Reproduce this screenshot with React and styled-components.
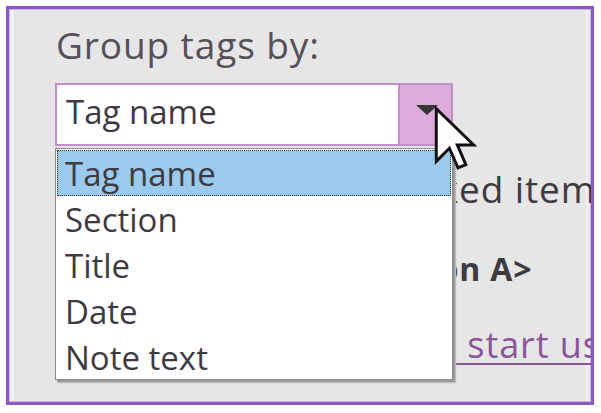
import React from "react";
import styled, { createGlobalStyle } from "styled-components";

const Global = createGlobalStyle`
  html, body { margin: 0; padding: 0; background: #ffffff; }
  body { font-family: "Open Sans", "Noto Sans", sans-serif; }
  * { box-sizing: border-box; }
`;

const Frame = styled.div`
  position: relative;
  margin: 6px 0 0 6px;
  width: 588px;
  height: 399px;
  border: 3px solid #8b5bbf;
  background: #e6e6e6;
  box-shadow: inset 0 0 0 1px #cdb6e6, inset 5px 0 0 #efefef, inset -6px 0 0 #ededed;
  padding: 14px 0 0 47px;
  overflow: hidden;
  font-family: "Open Sans", "Noto Sans", sans-serif;
`;

const Label = styled.div`
  font-size: 37px;
  line-height: 44px;
  color: #555058;
  letter-spacing: 0.9px;
  white-space: nowrap;
`;

const Combo = styled.div`
  display: flex;
  margin: 16px 0 0 -1px;
  width: 398px;
  height: 63px;
  border: 2px solid #c48cc6;
  background: #ffffff;
`;

const ComboValue = styled.div`
  flex: 1;
  padding: 7px 0 0 9px;
  font-size: 33px;
  line-height: 40px;
  color: #3e3a42;
  white-space: nowrap;
`;

const ComboButton = styled.div`
  width: 53px;
  display: flex;
  align-items: flex-start;
  justify-content: center;
  padding-top: 20px;
  border-left: 2px solid #c48cc6;
  background: #dcaadb;
`;

const Arrow = styled.div`
  width: 0;
  height: 0;
  border-left: 11px solid transparent;
  border-right: 11px solid transparent;
  border-top: 10px solid #353535;
  margin-left: 2px;
`;

const TextRow = styled.div`
  margin-top: ${(p) => p.$gap}px;
  padding-left: ${(p) => p.$indent}px;
  font-size: ${(p) => p.$size}px;
  font-weight: ${(p) => (p.$bold ? 700 : 400)};
  letter-spacing: ${(p) => p.$spacing || 0}px;
  line-height: 46px;
  color: #3e3a42;
  white-space: nowrap;
`;

const LinkText = styled.span`
  color: #8a559a;
  text-decoration: underline;
  text-decoration-thickness: 2px;
  text-underline-offset: 5px;
`;

const List = styled.ul`
  position: absolute;
  left: 46px;
  top: 139px;
  width: 398px;
  height: 232px;
  margin: 0;
  padding: 1px 1px;
  list-style: none;
  background: #ffffff;
  border: 1px solid #8a8a8a;
  box-shadow: 2px 2px 0 #9a9a9a, 3px 3px 1px #bdbdbd;
`;

const Item = styled.li`
  height: 46px;
  padding: 1px 0 0 7px;
  font-size: 33px;
  line-height: 44px;
  color: #3e3a42;
  white-space: nowrap;
  background: ${(p) => (p.$active ? "#9bcaef" : "transparent")};
  border: 1px ${(p) => (p.$active ? "dotted #2d2d2d" : "solid transparent")};
`;

const Cursor = styled.svg`
  position: absolute;
  left: 424px;
  top: 96px;
`;

const items = ["Tag name", "Section", "Title", "Date", "Note text"];

export default function App() {
  return (
    <>
      <Global />
      <Frame>
        <Label>Group tags by:</Label>
        <Combo>
          <ComboValue>Tag name</ComboValue>
          <ComboButton>
            <Arrow />
          </ComboButton>
        </Combo>
        <TextRow $gap={20} $indent={58} $size={37} $spacing={0.9}>
          Show only unchecked items
        </TextRow>
        <TextRow $gap={34} $indent={283} $size={32} $spacing={0.8} $bold>
          &lt;Section A&gt;
        </TextRow>
        <TextRow $gap={30} $indent={182} $size={36} $spacing={0.9}>
          <LinkText>Click here to start using tags</LinkText>
        </TextRow>
        <List>
          {items.map((t, i) => (
            <Item key={t} $active={i === 0}>
              {t}
            </Item>
          ))}
        </List>
        <Cursor width="46" height="70" viewBox="0 0 14 21">
          <path
            d="M1 1 L1 17 L5 13 L7.6 19 L10 18 L7.4 12 L12.4 12 Z"
            fill="#ffffff"
            stroke="#111111"
            strokeWidth="0.9"
            strokeLinejoin="miter"
          />
        </Cursor>
      </Frame>
    </>
  );
}
